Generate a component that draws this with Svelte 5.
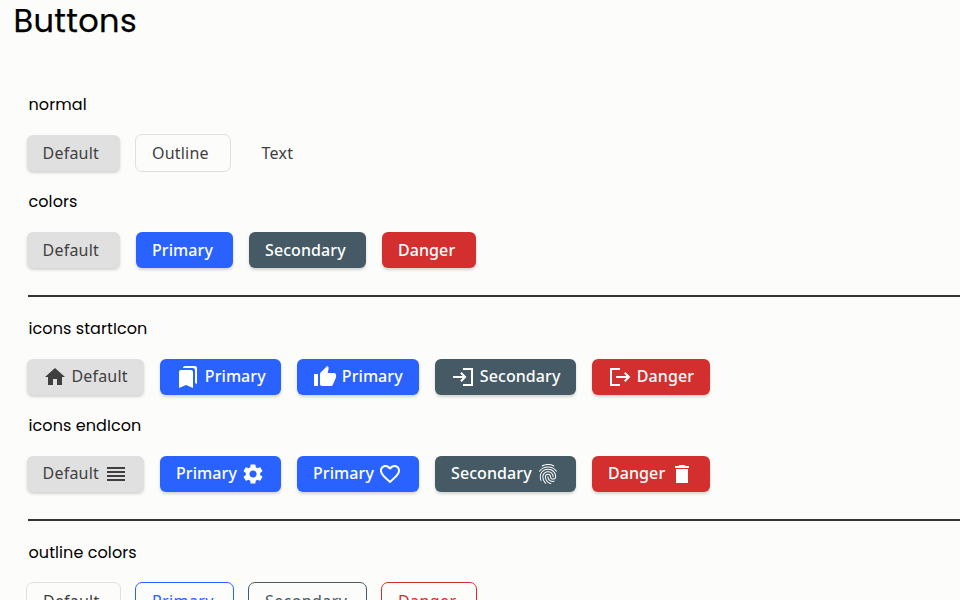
<script lang="ts">
  const groups = [
    { title: 'normal', items: [
      { label: 'Default', tone: 'default', w: 93 },
      { label: 'Outline', tone: 'default', kind: 'outline', w: 94 },
      { label: 'Text', tone: 'default', kind: 'text', w: 70 }
    ] },
    { title: 'colors', rule: true, items: [
      { label: 'Default', tone: 'default', w: 93 },
      { label: 'Primary', tone: 'primary', w: 97 },
      { label: 'Secondary', tone: 'secondary', w: 117 },
      { label: 'Danger', tone: 'danger', w: 94 }
    ] },
    { title: 'icons startIcon', items: [
      { label: 'Default', tone: 'default', start: 'home', w: 117 },
      { label: 'Primary', tone: 'primary', start: 'bookmarks', w: 121 },
      { label: 'Primary', tone: 'primary', start: 'thumb', w: 122 },
      { label: 'Secondary', tone: 'secondary', start: 'login', w: 141 },
      { label: 'Danger', tone: 'danger', start: 'logout', w: 118 }
    ] },
    { title: 'icons endIcon', rule: true, items: [
      { label: 'Default', tone: 'default', end: 'reorder', w: 117 },
      { label: 'Primary', tone: 'primary', end: 'settings', w: 121 },
      { label: 'Primary', tone: 'primary', end: 'heart', w: 122 },
      { label: 'Secondary', tone: 'secondary', end: 'fingerprint', w: 141 },
      { label: 'Danger', tone: 'danger', end: 'trash', w: 118 }
    ] },
    { title: 'outline colors', items: [
      { label: 'Default', tone: 'default', kind: 'outline', w: 93 },
      { label: 'Primary', tone: 'primary', kind: 'outline', w: 97 },
      { label: 'Secondary', tone: 'secondary', kind: 'outline', w: 117 },
      { label: 'Danger', tone: 'danger', kind: 'outline', w: 94 }
    ] }
  ] as any[];

  const icons: Record<string, string> = {
    home: 'M10 20v-6h4v6h5v-8h3L12 3 2 12h3v8z',
    bookmarks: 'M19 18l2 1V3c0-1.1-.9-2-2-2H8.99C7.89 1 7 1.9 7 3h10c1.1 0 2 .9 2 2v13zM15 5H5c-1.1 0-2 .9-2 2v16l7-3 7 3V7c0-1.1-.9-2-2-2z',
    thumb: 'M1 21h4V9H1v12zm22-11c0-1.1-.9-2-2-2h-6.31l.95-4.57.03-.32c0-.41-.17-.79-.44-1.06L14.17 1 7.59 7.59C7.22 7.95 7 8.45 7 9v10c0 1.1.9 2 2 2h9c.83 0 1.54-.5 1.84-1.22l3.02-7.05c.09-.23.14-.47.14-.73v-2z',
    login: 'M12 3v2h8v14h-8v2h10V3H12zM10.6 7.1 9.2 8.5l2.5 2.5H2v2h9.700l-2.500 2.500 1.400 1.400L15.500 12z',
    logout: 'M2 3v18h10v-2H4V5h8V3H2zM17.400 7.100 16 8.500l2.500 2.500H8v2h10.500L16 15.500l1.400 1.400L22.300 12z',
    reorder: 'M3 15h18v-2H3v2zm0 4h18v-2H3v2zm0-8h18V9H3v2zm0-6v2h18V5H3z',
    settings: 'M19.14 12.94c.04-.3.06-.61.06-.94 0-.32-.02-.64-.07-.94l2.03-1.58c.18-.14.23-.41.12-.61l-1.92-3.32c-.12-.22-.37-.29-.59-.22l-2.39.96c-.5-.38-1.03-.7-1.62-.94l-.36-2.54c-.04-.24-.24-.41-.48-.41h-3.84c-.24 0-.43.17-.47.41l-.36 2.54c-.59.24-1.13.57-1.62.94l-2.39-.96c-.22-.08-.47 0-.59.22L2.74 8.87c-.12.21-.08.47.12.61l2.03 1.58c-.05.3-.09.63-.09.94s.02.64.07.94l-2.03 1.58c-.18.14-.23.41-.12.61l1.92 3.32c.12.22.37.29.59.22l2.39-.96c.5.38 1.03.7 1.62.94l.36 2.54c.05.24.24.41.48.41h3.84c.24 0 .44-.17.47-.41l.36-2.54c.59-.24 1.13-.56 1.62-.94l2.39.96c.22.08.47 0 .59-.22l1.92-3.32c.12-.22.07-.47-.12-.61l-2.01-1.58zM12 15.6c-1.98 0-3.600-1.620-3.600-3.600s1.620-3.600 3.600-3.600 3.600 1.620 3.600 3.600-1.620 3.600-3.600 3.600z',
    heart: 'M16.500 3c-1.740 0-3.410.81-4.500 2.090C10.910 3.810 9.240 3 7.500 3 4.420 3 2 5.420 2 8.500c0 3.780 3.400 6.860 8.550 11.540L12 21.350l1.450-1.320C18.600 15.360 22 12.280 22 8.500 22 5.420 19.580 3 16.500 3zm-4.400 15.550l-.1.1-.1-.1C7.140 14.240 4 11.390 4 8.500 4 6.500 5.500 5 7.500 5c1.540 0 3.040.99 3.570 2.360h1.870C13.460 5.990 14.960 5 16.500 5c2 0 3.500 1.500 3.500 3.500 0 2.890-3.140 5.740-7.900 10.050z',
    fingerprint: 'M17.810 4.470c-.08 0-.16-.02-.23-.06C15.660 3.420 14 3 12.010 3c-1.980 0-3.860.47-5.570 1.410-.24.13-.54.04-.68-.2-.13-.24-.04-.55.2-.68C7.820 2.520 9.860 2 12.010 2c2.130 0 3.990.47 6.030 1.520.25.13.34.43.21.67-.09.18-.26.28-.44.28zM3.500 9.720c-.1 0-.2-.03-.29-.09-.23-.16-.28-.47-.12-.7.99-1.400 2.250-2.500 3.750-3.270C9.980 4.040 14 4.030 17.150 5.650c1.500.77 2.760 1.860 3.750 3.250.16.22.11.54-.12.7-.23.16-.54.11-.7-.12-.9-1.260-2.040-2.250-3.390-2.940-2.870-1.470-6.540-1.470-9.400.01-1.360.7-2.500 1.700-3.400 2.960-.08.14-.23.21-.39.21zm6.250 12.070c-.13 0-.26-.05-.35-.15-.87-.87-1.340-1.430-2.010-2.640-.69-1.230-1.050-2.730-1.050-4.340 0-2.970 2.540-5.390 5.660-5.390s5.660 2.420 5.660 5.390c0 .28-.22.5-.5.5s-.5-.22-.5-.5c0-2.420-2.090-4.390-4.660-4.390-2.570 0-4.660 1.970-4.660 4.390 0 1.440.32 2.770.93 3.850.64 1.150 1.080 1.640 1.850 2.420.19.2.19.51 0 .71-.11.1-.24.15-.37.15zm7.170-1.850c-1.190 0-2.240-.3-3.100-.89-1.490-1.010-2.380-2.650-2.380-4.390 0-.28.22-.5.5-.5s.5.22.5.5c0 1.410.72 2.740 1.940 3.560.71.48 1.540.71 2.540.71.24 0 .64-.03 1.040-.1.27-.05.53.13.58.41.05.27-.13.53-.41.58-.57.11-1.070.12-1.210.12zM14.910 22c-.04 0-.09-.01-.13-.02-1.590-.44-2.630-1.030-3.720-2.100-1.400-1.390-2.170-3.240-2.170-5.220 0-1.620 1.380-2.940 3.080-2.940 1.700 0 3.080 1.320 3.080 2.940 0 1.070.93 1.940 2.080 1.940s2.080-.87 2.080-1.940c0-3.770-3.250-6.830-7.250-6.830-2.840 0-5.440 1.580-6.610 4.030-.39.81-.59 1.760-.59 2.800 0 .78.07 2.010.67 3.610.1.26-.03.55-.29.64-.26.1-.55-.04-.64-.29-.49-1.310-.73-2.610-.73-3.960 0-1.200.23-2.290.68-3.240 1.330-2.790 4.280-4.600 7.510-4.600 4.550 0 8.250 3.510 8.250 7.830 0 1.620-1.380 2.940-3.080 2.940s-3.080-1.320-3.080-2.940c0-1.070-.93-1.940-2.080-1.940s-2.080.87-2.080 1.940c0 1.710.66 3.310 1.870 4.510.95.94 1.860 1.460 3.270 1.850.27.07.42.35.35.61-.05.23-.26.38-.47.38z',
    trash: 'M6 21h12V7H6v14zM19 4h-3.500l-1-1h-5l-1 1H5v2h14V4z'
  };
</script>

{#snippet icon(name: string)}
  <svg viewBox="0 0 24 24" width="24" height="24" aria-hidden="true"><path d={icons[name]} /></svg>
{/snippet}

<main>
  <h1>Buttons</h1>
  {#each groups as g}
    <section>
      <h2>{g.title}</h2>
      <div class="row">
        {#each g.items as b}
          <button class="{b.tone} {b.kind ?? 'solid'}" class:with-icon={b.start || b.end} style="width: {b.w}px">
            {#if b.start}{@render icon(b.start)}{/if}
            <span class:after={b.start}>{b.label}</span>
            {#if b.end}{@render icon(b.end)}{/if}
          </button>
        {/each}
      </div>
    </section>
    {#if g.rule}<hr />{/if}
  {/each}
</main>

<style>
  :global(body) { background: #fcfcfa; overflow: hidden; }
  main { height: 600px; overflow: hidden; box-sizing: border-box; }
  h1, h2 {
    font-family: Poppins, Inter, sans-serif;
    font-feature-settings: 'cv11';
    color: #000;
    margin: 0;
  }
  h1 { font-size: 32px; font-weight: 400; line-height: 42px; padding-left: 13.5px; margin: 0 0 45px; letter-spacing: 0.35px; -webkit-text-stroke: 0.25px #000; }
  h2 { font-size: 16px; font-weight: 400; line-height: 24px; margin-left: 1.5px; padding-top: 6px; letter-spacing: 0.08px; }
  section { height: 97px; padding-left: 27px; box-sizing: border-box; }
  .row { display: flex; gap: 16px; padding-top: 18px; }
  hr { height: 2px; border: 0; margin: 0 0 28px 28px; background: #333; transform: translateY(14px); }
  button {
    display: flex;
    align-items: center;
    box-sizing: border-box;
    flex: none;
    height: 36px;
    padding: 0 0 0 16px;
    border: 0;
    border-radius: 6px;
    font: 500 16px/24px 'Noto Sans', sans-serif;
    letter-spacing: 0.08px;
    white-space: nowrap;
  }
  span { margin-right: 4.4px; }
  .after { margin: 0 0 0 4.8px; }
  .with-icon span { margin-top: -2px; }
  svg { fill: currentColor; flex: none; }
  .solid { color: #fff; box-shadow: 0 2px 3px rgba(51, 51, 51, 0.2); }
  .default { font-weight: 400; color: #3f3f3f; letter-spacing: 0.2px; padding-left: 15.6px; }
  .default span { margin-right: 5px; }
  .default.solid { background: #e0e0e0; }
  .primary.solid { background: #2962ff; }
  .secondary.solid { background: #455a64; }
  .danger.solid { background: #d32f2f; }
  .outline, .text { background: transparent; }
  .outline { outline: 1px solid currentColor; font-weight: 400; letter-spacing: 0.4px; }
  .default.outline { outline-color: #e0e0e0; letter-spacing: 0.2px; padding-left: 16px; }
  .primary.outline { color: #2962ff; }
  .secondary.outline { color: #455a64; }
  .danger.outline { color: #d32f2f; }
</style>
